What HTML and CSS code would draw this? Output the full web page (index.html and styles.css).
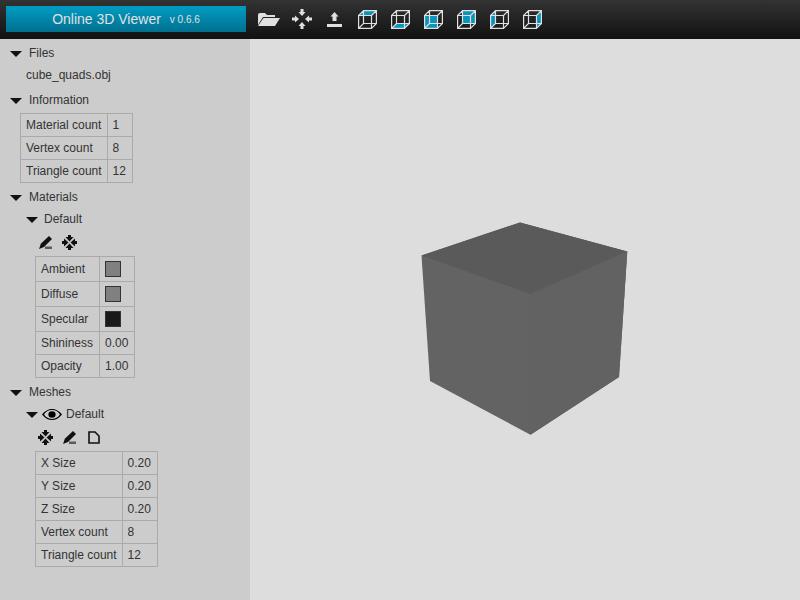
FILE: index.html
```html
<!DOCTYPE html>
<html lang="en">
<head>
<meta charset="utf-8">
<title>Online 3D Viewer</title>
<link rel="stylesheet" href="styles.css">
</head>
<body>
<svg class="defs" width="0" height="0">
  <defs>
    <g id="cube-frame">
      <path d="M.6 5.500H13.500V18.400H.6ZM5.500 .6H18.400V13.500H5.500ZM.6 5.500L5.500 .6M13.500 5.500L18.400 .6M.6 18.400L5.500 13.500M13.500 18.400L18.400 13.500" fill="none" stroke="#e0e0e0" stroke-width="1.200"/>
    </g>
    <g id="arrows">
      <path d="M6 0H9V2H11.500L7.500 6.500L3.500 2H6ZM6 15H9V13H11.500L7.500 8.500L3.500 13H6ZM0 6H2V3.500L6.500 7.500L2 11.500V9H0ZM15 6H13V3.500L8.500 7.500L13 11.500V9H15Z"/>
    </g>
    <g id="pen">
      <path d="M10 0L13 3L5 11L0 13L2 7.500Z"/>
      <rect x="6" y="10.500" width="7" height="2.500" opacity=".6"/>
    </g>
  </defs>
</svg>
<header class="topbar">
  <div class="brand"><span class="brand-name">Online 3D Viewer</span><span class="brand-version">v 0.6.6</span></div>
  <nav class="tools">
    <svg class="tool tool-folder" width="22" height="13" viewBox="0 0 22 13"><path fill="#e0e0e0" d="M0 2Q0 0 2 0H7L9 2H17V4H5L0 12ZM5.500 5H22L17 13H0Z"/></svg>
    <svg class="tool tool-arrows" width="20" height="20" viewBox="0 0 20 20"><path fill="#e0e0e0" d="M8.500 0H11.500V3H13.500L10 7L6.500 3H8.500ZM8.500 20H11.500V17H13.500L10 13L6.500 17H8.500ZM0 8.500H3V6.500L7 10L3 13.500V11.500H0ZM20 8.500H17V6.500L13 10L17 13.500V11.500H20Z"/></svg>
    <svg class="tool tool-upload" width="15" height="15" viewBox="0 0 15 15"><path fill="#e0e0e0" d="M7.500 0L11.500 4.500H9.500V9H5.500V4.500H3.500ZM0 12H15V15H0Z"/></svg>
    <svg class="tool tool-cube" width="19" height="19" viewBox="0 0 19 19"><path fill="#0a93bd" d="M5.500 .5H18.500L13.500 5.500H.5Z"/><use href="#cube-frame"/></svg>
    <svg class="tool tool-cube" width="19" height="19" viewBox="0 0 19 19"><path fill="#0a93bd" d="M5.500 13.500H18.500L13.500 18.500H.5Z"/><use href="#cube-frame"/></svg>
    <svg class="tool tool-cube" width="19" height="19" viewBox="0 0 19 19"><rect fill="#0a93bd" x=".5" y="5.500" width="13" height="13"/><use href="#cube-frame"/></svg>
    <svg class="tool tool-cube" width="19" height="19" viewBox="0 0 19 19"><rect fill="#0a93bd" x="5.500" y=".5" width="13" height="13"/><use href="#cube-frame"/></svg>
    <svg class="tool tool-cube" width="19" height="19" viewBox="0 0 19 19"><path fill="#0a93bd" d="M.5 5.500L5.500 .5V13.500L.5 18.500Z"/><use href="#cube-frame"/></svg>
    <svg class="tool tool-cube" width="19" height="19" viewBox="0 0 19 19"><path fill="#0a93bd" d="M13.500 5.500L18.500 .5V13.500L13.500 18.500Z"/><use href="#cube-frame"/></svg>
  </nav>
</header>
<main class="workspace">
  <aside class="sidebar">
    <div class="row head"><span class="tri"></span>Files</div>
    <div class="row file">cube_quads.obj</div>

    <div class="row head section"><span class="tri"></span>Information</div>
    <table class="info info-top">
      <tr><td>Material count</td><td>1</td></tr>
      <tr><td>Vertex count</td><td>8</td></tr>
      <tr><td>Triangle count</td><td>12</td></tr>
    </table>

    <div class="row head section"><span class="tri"></span>Materials</div>
    <div class="row sub"><span class="tri"></span>Default</div>
    <div class="actions">
      <svg class="icon-first" width="13" height="13" viewBox="0 0 13 13"><use href="#pen"/></svg>
      <svg width="15" height="15" viewBox="0 0 15 15"><use href="#arrows"/></svg>
    </div>
    <table class="info nested materials">
      <tr class="tall"><td>Ambient</td><td><span class="swatch grey"></span></td></tr>
      <tr class="tall"><td>Diffuse</td><td><span class="swatch grey"></span></td></tr>
      <tr class="tall"><td>Specular</td><td><span class="swatch black"></span></td></tr>
      <tr><td>Shininess</td><td>0.00</td></tr>
      <tr><td>Opacity</td><td>1.00</td></tr>
    </table>

    <div class="row head section"><span class="tri"></span>Meshes</div>
    <div class="row sub"><span class="tri"></span><svg class="eye" width="20" height="11" viewBox="0 0 20 12" preserveAspectRatio="none"><path fill-rule="evenodd" d="M0 6Q4.500 0 10 0T20 6Q15.500 12 10 12T0 6ZM10 1.200C6 1.200 3.500 3.500 2 6C3.500 8.500 6 10.800 10 10.800S16.500 8.500 18 6C16.500 3.500 14 1.200 10 1.200Z"/><circle cx="10" cy="6" r="3.600"/></svg>Default</div>
    <div class="actions">
      <svg width="15" height="15" viewBox="0 0 15 15"><use href="#arrows"/></svg>
      <svg width="13" height="13" viewBox="0 0 13 13"><use href="#pen"/></svg>
      <svg class="icon-page" width="12" height="13" viewBox="0 0 12 13"><path fill="none" stroke="#111" stroke-width="1.600" d="M1 1H7L11 5V12H1Z"/></svg>
    </div>
    <table class="info nested">
      <tr><td>X Size</td><td>0.20</td></tr>
      <tr><td>Y Size</td><td>0.20</td></tr>
      <tr><td>Z Size</td><td>0.20</td></tr>
      <tr><td>Vertex count</td><td>8</td></tr>
      <tr><td>Triangle count</td><td>12</td></tr>
    </table>
  </aside>
  <section class="viewport">
    <svg class="model" width="550" height="561" viewBox="250 39 550 561">
      <polygon fill="#636363" points="520,222.500 627.300,251.500 619,377 530.500,434.700 430,381 421.500,255.500"/>
      <polygon fill="#5a5a5a" points="520,222.500 627.300,251.500 530.500,294 421.500,255.500"/>
      <polygon fill="#626262" points="530.500,294 627.300,251.500 619,377 530.500,434.700"/>
    </svg>
  </section>
</main>
</body>
</html>
```
FILE: styles.css
```css
* { box-sizing: border-box; }
html, body { margin: 0; height: 100%; overflow: hidden; }
body {
  display: flex;
  flex-direction: column;
  font-family: "Liberation Sans", Arial, sans-serif;
  font-size: 12px;
  color: #333;
  background: #ddd;
}
.defs { display: block; height: 0; }
.topbar {
  display: flex;
  align-items: center;
  height: 39px;
  flex: none;
  padding: 0 6px 1px;
  background: linear-gradient(#333, #111);
}
.brand {
  width: 240px;
  height: 26px;
  display: flex;
  align-items: center;
  justify-content: center;
  gap: 9px;
  color: #e0e0e0;
  background: linear-gradient(#009cc4, #00708f);
}
.brand-name { font-size: 14px; }
.brand-version { font-size: 10px; }
.tools { display: flex; align-items: center; margin-left: 12px; }
.tool { display: block; flex: none; }
.tool-arrows { margin-left: 12px; }
.tool-upload { margin-left: 15px; margin-top: 1px; }
.tool-cube { margin-left: 14px; }
.tool-upload + .tool-cube { margin-left: 16px; }
.workspace { display: flex; flex: 1; min-height: 0; }
.sidebar {
  width: 250px;
  flex: none;
  padding: 3px 0 0 10px;
  background: #ccc;
}
.row {
  display: flex;
  align-items: center;
  height: 22px;
}
.tri {
  width: 0;
  height: 0;
  flex: none;
  margin-right: 6px;
  border-left: 6.500px solid transparent;
  border-right: 6.500px solid transparent;
  border-top: 6px solid #111;
  position: relative;
  top: 1px;
}
.head .tri { margin-right: 7px; }
.file { padding-left: 16px; }
.section { margin-top: 3px; }
.sub { padding-left: 16px; }
.eye { margin: 1px 4px 0 -2px; flex: none; }
.info {
  border-collapse: collapse;
  margin: 2px 0 0 10px;
}
.info td {
  border: 1px solid #aaa;
  height: 23px;
  padding: 0 5px;
  line-height: 14px;
}
.info td:last-child { padding-right: 6px; }
.info tr.tall td { height: 25px; }
.nested { margin: 0 0 0 25px; }
.materials td:first-child { width: 64px; }
.actions {
  display: flex;
  align-items: center;
  gap: 10px;
  height: 25px;
  margin-bottom: 1px;
  padding-left: 28px;
  fill: #111;
}
.icon-first { margin-left: 1px; }
.icon-page { margin-left: 2px; }
.swatch {
  display: block;
  width: 16px;
  height: 16px;
  border: 1px solid #333;
}
.grey { background: #808080; }
.black { background: #1a1a1a; }
.viewport { flex: 1; min-width: 0; background: #ddd; }
.model { display: block; }
```
